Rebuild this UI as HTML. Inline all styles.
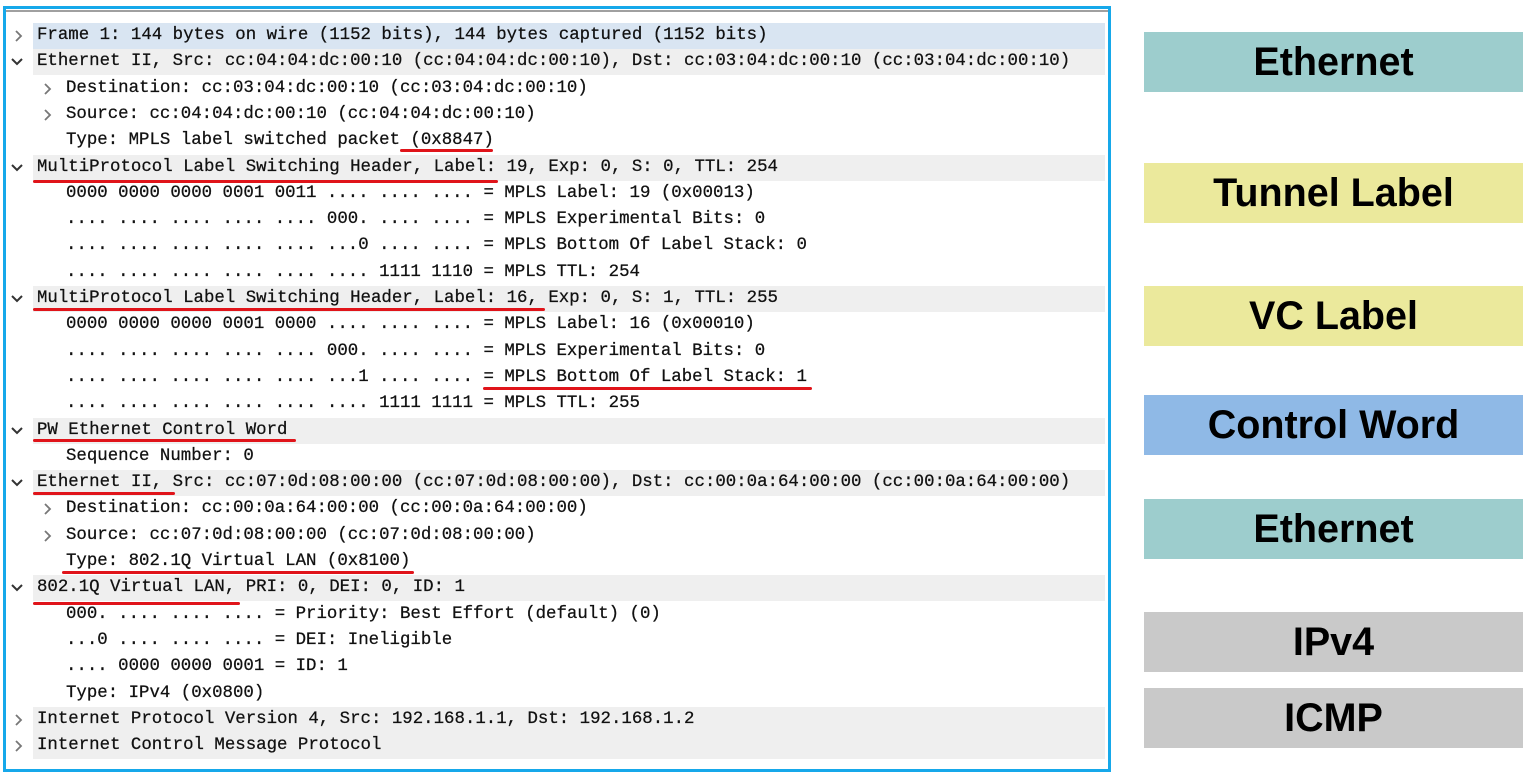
<!DOCTYPE html><html><head><style>
body{margin:0;width:1529px;height:779px;background:#fff;position:relative;overflow:hidden;font-family:"Liberation Mono",monospace}
.box{position:absolute;left:3px;top:6px;width:1102px;height:760px;border:3px solid #16a8ea;background:#fff}
.topline{position:absolute;left:6px;top:10px;width:1102px;height:2px;background:#a0a0a0}
.r{position:absolute;left:0;width:1108px;height:26px;font-size:17.4px;line-height:26px;color:#111;white-space:pre;-webkit-text-stroke:0.25px #111}
.r.t .bg{position:absolute;left:33px;right:3px;top:0;bottom:0;background:#efefef}
.r.sel .bg{background:#d9e5f2}
.r span.x{position:absolute;top:0}
.r svg{position:absolute;top:7px}
.u{position:absolute;height:3px;background:#e0141a;border-radius:2px}
.lb{position:absolute;left:1144px;width:379px;height:60px;font:bold 39.5px "Liberation Sans",Arial,sans-serif;text-align:center;line-height:60px;color:#000}
</style></head><body>
<div class="box"></div><div class="topline"></div>
<div id="rows"></div>
<script>
var R=[
[0,'>','Frame 1: 144 bytes on wire (1152 bits), 144 bytes captured (1152 bits)',1],
[0,'v','Ethernet II, Src: cc:04:04:dc:00:10 (cc:04:04:dc:00:10), Dst: cc:03:04:dc:00:10 (cc:03:04:dc:00:10)'],
[1,'>','Destination: cc:03:04:dc:00:10 (cc:03:04:dc:00:10)'],
[1,'>','Source: cc:04:04:dc:00:10 (cc:04:04:dc:00:10)'],
[1,'','Type: MPLS label switched packet (0x8847)'],
[0,'v','MultiProtocol Label Switching Header, Label: 19, Exp: 0, S: 0, TTL: 254'],
[1,'','0000 0000 0000 0001 0011 .... .... .... = MPLS Label: 19 (0x00013)'],
[1,'','.... .... .... .... .... 000. .... .... = MPLS Experimental Bits: 0'],
[1,'','.... .... .... .... .... ...0 .... .... = MPLS Bottom Of Label Stack: 0'],
[1,'','.... .... .... .... .... .... 1111 1110 = MPLS TTL: 254'],
[0,'v','MultiProtocol Label Switching Header, Label: 16, Exp: 0, S: 1, TTL: 255'],
[1,'','0000 0000 0000 0001 0000 .... .... .... = MPLS Label: 16 (0x00010)'],
[1,'','.... .... .... .... .... 000. .... .... = MPLS Experimental Bits: 0'],
[1,'','.... .... .... .... .... ...1 .... .... = MPLS Bottom Of Label Stack: 1'],
[1,'','.... .... .... .... .... .... 1111 1111 = MPLS TTL: 255'],
[0,'v','PW Ethernet Control Word'],
[1,'','Sequence Number: 0'],
[0,'v','Ethernet II, Src: cc:07:0d:08:00:00 (cc:07:0d:08:00:00), Dst: cc:00:0a:64:00:00 (cc:00:0a:64:00:00)'],
[1,'>','Destination: cc:00:0a:64:00:00 (cc:00:0a:64:00:00)'],
[1,'>','Source: cc:07:0d:08:00:00 (cc:07:0d:08:00:00)'],
[1,'','Type: 802.1Q Virtual LAN (0x8100)'],
[0,'v','802.1Q Virtual LAN, PRI: 0, DEI: 0, ID: 1'],
[1,'','000. .... .... .... = Priority: Best Effort (default) (0)'],
[1,'','...0 .... .... .... = DEI: Ineligible'],
[1,'','.... 0000 0000 0001 = ID: 1'],
[1,'','Type: IPv4 (0x0800)'],
[0,'>','Internet Protocol Version 4, Src: 192.168.1.1, Dst: 192.168.1.2'],
[0,'>','Internet Control Message Protocol']];
var h='';
R.forEach(function(r,i){var top=23+i*26.3;var cls='r'+(r[0]==0?' t':'')+(r[3]?' sel':'');
var cx=r[0]==0?10:39;var tx=r[0]==0?37:66;
var c='';
if(r[1]=='>')c='<svg style="left:'+(cx+4)+'px" width="10" height="12"><polyline points="2,1 7,6 2,11" fill="none" stroke="#777" stroke-width="1.8"/></svg>';
if(r[1]=='v')c='<svg style="left:'+cx+'px" width="14" height="12"><polyline points="2,3 7,8 12,3" fill="none" stroke="#333" stroke-width="2"/></svg>';
h+='<div class="'+cls+'" style="top:'+top+'px"><div class="bg"></div>'+c+'<span class="x" style="left:'+tx+'px">'+r[2]+'</span></div>';});
document.getElementById('rows').innerHTML=h;
</script>
<div class="u" style="left:400px;top:149px;width:93px"></div>
<div class="u" style="left:33px;top:180px;width:465px"></div>
<div class="u" style="left:33px;top:308px;width:512px"></div>
<div class="u" style="left:483px;top:387px;width:329px"></div>
<div class="u" style="left:33px;top:439px;width:263px"></div>
<div class="u" style="left:33px;top:492px;width:142px"></div>
<div class="u" style="left:62px;top:571px;width:352px"></div>
<div class="u" style="left:33px;top:602px;width:207px"></div>
<div class="lb" style="top:32px;background:#9dcdcd">Ethernet</div>
<div class="lb" style="top:163px;background:#ebe99c">Tunnel Label</div>
<div class="lb" style="top:286px;background:#ebe99c">VC Label</div>
<div class="lb" style="top:395px;background:#8fb9e6">Control Word</div>
<div class="lb" style="top:499px;background:#9dcdcd">Ethernet</div>
<div class="lb" style="top:612px;background:#c9c9c9">IPv4</div>
<div class="lb" style="top:688px;background:#c9c9c9">ICMP</div>
</body></html>
